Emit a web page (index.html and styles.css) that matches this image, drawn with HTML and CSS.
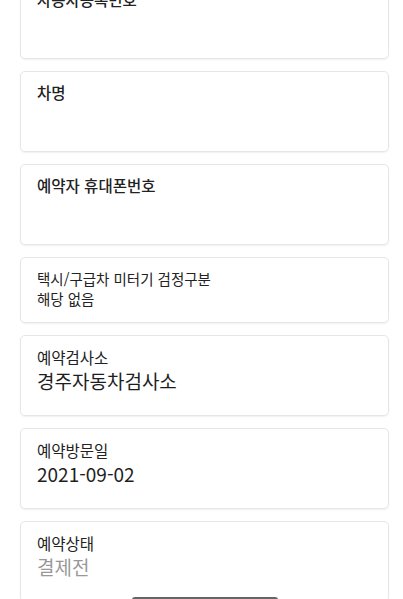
FILE: index.html
```html
<!DOCTYPE html>
<html lang="ko">
<head>
    <meta charset="UTF-8">
    <meta name="viewport" content="width=device-width, initial-scale=1.0">
    <title>예약 정보</title>
    <link rel="stylesheet" href="styles.css">
</head>
<body>
    <div class="reserve-info">
        <div class="info-card field">
            <label class="field-label" for="car-no">자동차등록번호</label>
            <input type="text" id="car-no" class="field-input" readonly>
        </div>
        <div class="info-card field">
            <label class="field-label" for="car-name">차명</label>
            <input type="text" id="car-name" class="field-input" readonly>
        </div>
        <div class="info-card field">
            <label class="field-label" for="phone">예약자 휴대폰번호</label>
            <input type="text" id="phone" class="field-input" readonly>
        </div>
        <div class="info-card meter">
            <div class="meter-line">택시/구급차 미터기 검정구분</div>
            <div class="meter-line">해당 없음</div>
        </div>
        <div class="info-card">
            <div class="info-label">예약검사소</div>
            <div class="info-value">경주자동차검사소</div>
        </div>
        <div class="info-card">
            <div class="info-label">예약방문일</div>
            <div class="info-value">2021-09-02</div>
        </div>
        <div class="info-card">
            <div class="info-label">예약상태</div>
            <div class="info-value status">결제전</div>
        </div>
    </div>
    <div class="bottom-button"></div>
</body>
</html>
```

FILE: styles.css
```css
body {
    margin: 0;
    padding: 0;
    background-color: #ffffff;
    font-family: "Noto Sans CJK KR", "Noto Sans", sans-serif;
    color: #222222;
    overflow: hidden;
}
.reserve-info {
    display: flex;
    flex-direction: column;
    gap: 12px;
    margin: -22px 14px 0 20px;
}
.info-card {
    box-sizing: border-box;
    height: 81px;
    border: 1px solid #e6e6e6;
    border-radius: 5px;
    box-shadow: 0 1px 2px rgba(0, 0, 0, 0.06);
    padding: 11px 16px;
    display: flex;
    flex-direction: column;
}
.field {
    padding-top: 9px;
}
.field-label {
    font-size: 15.5px;
    line-height: 22px;
    font-weight: 500;
    color: #222222;
}
.field-input {
    border: none;
    outline: none;
    padding: 0;
    margin-top: 6px;
    height: 24px;
    font-family: inherit;
    font-size: 15px;
    color: #f0f0f0;
    background: transparent;
}
.meter {
    height: 66px;
    padding-top: 11px;
}
.meter-line {
    font-size: 14.5px;
    line-height: 20px;
    color: #222222;
}
.info-label {
    font-size: 15.5px;
    line-height: 20px;
    color: #222222;
}
.info-value {
    font-size: 19px;
    line-height: 27px;
    color: #1e1e1e;
}
.status {
    color: #999999;
}
.bottom-button {
    position: fixed;
    top: 597px;
    left: 132px;
    width: 146px;
    height: 30px;
    background-color: #666666;
    border-radius: 3px;
}
```
